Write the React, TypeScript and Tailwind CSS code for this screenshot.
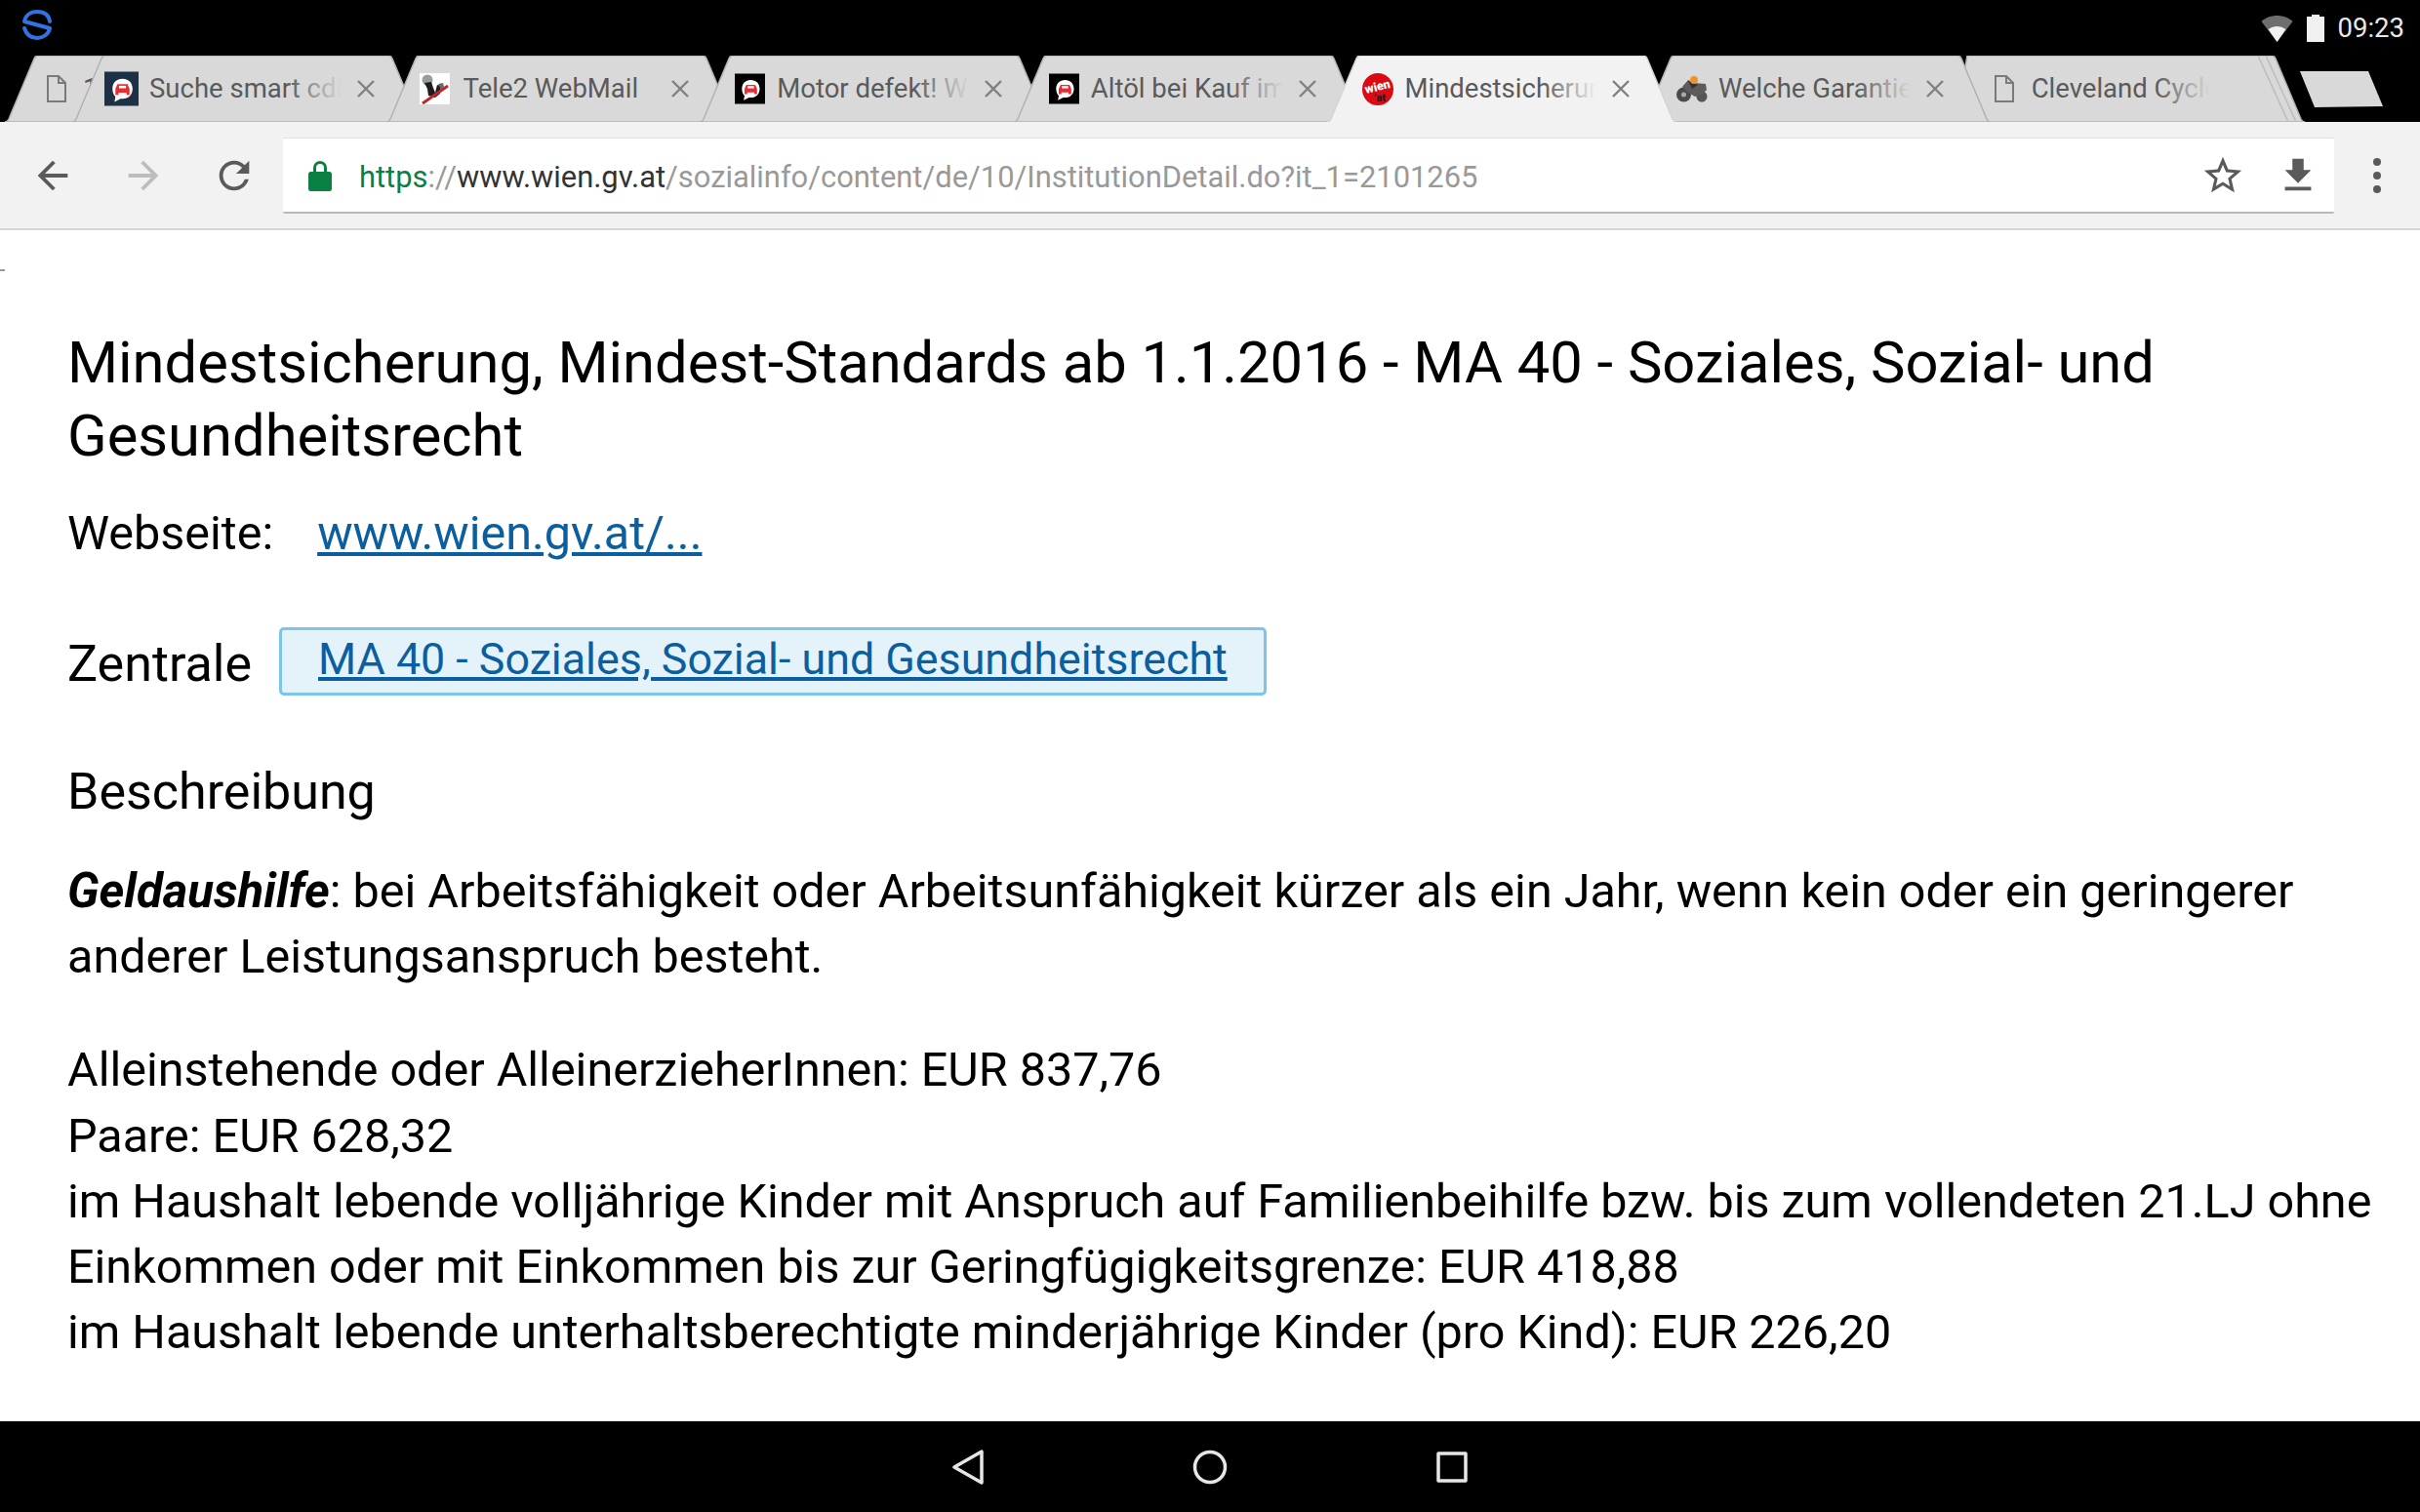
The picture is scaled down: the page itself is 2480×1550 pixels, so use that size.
import type { ReactNode } from 'react';

const font = { fontFamily: 'Roboto, "Noto Sans", sans-serif' };

function Md({ d, className }: { d: string; className?: string }) {
  return (
    <svg viewBox="0 0 24 24" className={className} fill="currentColor">
      <path d={d} />
    </svg>
  );
}

function PageIcon() {
  return (
    <svg viewBox="0 0 22 30" className="h-[30px] w-[22px]" fill="none" stroke="#7a7a7a" strokeWidth="2">
      <path d="M2 2h11l7 7v19H2z" />
      <path d="M13 2v7h7" />
    </svg>
  );
}

function CarBubble({ bg, large }: { bg: string; large?: boolean }) {
  return (
    <svg viewBox="0 0 34 34" className={large ? 'h-[36px] w-[35px]' : 'ml-[3px] h-[32px] w-[31px]'}>
      <rect width="34" height="34" fill={bg} />
      <path d="M18 7c6 0 10 4 10 10s-4 10-10 10h-2l-6 3 1-5c-2-2-3-5-3-8 0-6 4-10 10-10z" fill="#fff" />
      <path d="M13 12.5h10l2 4.5v6h-3v-2h-8v2h-3v-6z" fill="#ee2a2e" />
      <rect x="14.5" y="14" width="7" height="2.5" fill="#fff" />
    </svg>
  );
}

function TeleIcon() {
  return (
    <svg viewBox="0 0 31 32" className="ml-[1px] h-[32px] w-[31px]">
      <rect width="31" height="32" fill="#fff" />
      <circle cx="8" cy="7" r="5.5" fill="#9c9c9c" />
      <path d="M5 10l7-1 2 6 2 5 2-8 4 1-1 8-5 4-7-2-1-7z" fill="#1d1d1d" />
      <path d="M19 11l5-1 1 4-3 3z" fill="#6a6a6a" />
      <path d="M3 31L29 13" stroke="#c0272d" strokeWidth="3" />
    </svg>
  );
}

function WienIcon() {
  return (
    <svg viewBox="0 0 32 33" className="ml-[3px] h-[33px] w-[32px]">
      <ellipse cx="16" cy="16.5" rx="16" ry="16.5" fill="#dc0a12" />
      <text x="3" y="18" fontSize="12.5" fontWeight="900" fill="#fff" fontFamily="Roboto" transform="rotate(-14 16 16)">wien</text>
      <text x="12" y="29" fontSize="11" fontWeight="900" fill="#1c1c2c" fontFamily="Roboto">’at</text>
    </svg>
  );
}

function BikeIcon() {
  return (
    <svg viewBox="0 0 32 28" className="ml-[3px] h-[28px] w-[32px]">
      <circle cx="7.5" cy="20" r="7.5" fill="#4a4a4a" />
      <circle cx="26" cy="22" r="5.5" fill="#555" />
      <circle cx="7.5" cy="20" r="2.5" fill="#aaa" />
      <path d="M6 12l6-7 6 3 12 1 1 6-5 5-7 2-7-4z" fill="#5c5c5c" />
      <path d="M12 6l10 4-6 4z" fill="#333" />
      <circle cx="18" cy="5" r="4" fill="#ec9430" />
    </svg>
  );
}

type TabProps = {
  title: string;
  icon: ReactNode;
  className: string;
  active?: boolean;
  fade?: boolean;
  close?: boolean;
  wide?: boolean;
  stacked?: boolean;
  pad?: string;
  gap?: string;
  titleWidth?: string;
};

function Tab({
  title,
  icon,
  className,
  active,
  fade,
  close = true,
  wide,
  stacked,
  pad = 'pl-[33px]',
  gap = 'ml-[11px]',
  titleWidth = 'w-[197px]',
}: TabProps) {
  const left = wide ? 'M0 68L12 0' : 'M0 68C2 68 3 67 4 65L30 3C31 1 32 0 34 0';
  return (
    <div className={`relative flex h-[68px] w-[358px] shrink-0 items-center ${pad} ${className}`}>
      <svg viewBox="0 0 358 68" className="absolute inset-0 h-[68px] w-[358px]">
        <path
          d={`${left}H324C326 0 327 1 328 3L354 65C355 67 356 68 358 68${active ? '' : 'Z'}`}
          fill={active ? '#f2f2f2' : '#d9d9d9'}
          stroke={active ? '#d4d4d4' : '#b2b2b2'}
          strokeWidth="1.5"
        />
        {stacked && <path d="M310 0L341 68M318 0L349 68" stroke="#bcbcbc" strokeWidth="1.5" fill="none" />}
      </svg>
      <div className="relative flex w-[35px] shrink-0 items-center">{icon}</div>
      <div
        className={`relative ${gap} ${titleWidth} overflow-hidden whitespace-nowrap text-[27.5px] leading-[40px] text-[#5a5a5a]`}
      >
        {title}
        {fade && (
          <div
            className={`absolute inset-y-0 right-0 w-[56px] bg-linear-to-r from-transparent ${active ? 'to-[#f2f2f2]' : 'to-[#d9d9d9]'}`}
          />
        )}
      </div>
      {close && (
        <svg viewBox="0 0 18 18" className="relative ml-[16px] h-[18px] w-[18px]" stroke="#808080" strokeWidth="2.4">
          <path d="M1 1l16 16M17 1L1 17" />
        </svg>
      )}
    </div>
  );
}

function StatusBar() {
  return (
    <div className="flex h-[57px] items-center bg-black pl-[22px] pr-[16px]">
      <svg
        viewBox="0 0 32 32"
        className="-mt-[8px] h-[32px] w-[32px]"
        fill="none"
        stroke="#2f74e0"
        strokeWidth="4"
        strokeLinecap="round"
        strokeLinejoin="round"
      >
        <path d="M29 13C28 6 23 3 16 3 9 3 4 7 3 13L29 20C28 26 22 30 16 30 9 30 5 26 3 20" />
      </svg>
      <svg viewBox="0 0 32 28" className="ml-auto h-[28px] w-[33px]">
        <path d="M16 28L0 7C4 3 10 1 16 1s12 2 16 6z" fill="#6e6e6e" />
        <path d="M16 28L7 15c3-2 6-3 9-3s6 1 9 3z" fill="#f0f0f0" />
      </svg>
      <svg viewBox="0 0 18 28" className="ml-[14px] h-[28px] w-[18px]" fill="#f0f0f0">
        <path d="M5 0h8v2h5v26H0V2h5z" />
      </svg>
      <span className="ml-[14px] text-[27.5px] leading-none text-[#e8e8e8]">09:23</span>
    </div>
  );
}

function TabStrip() {
  return (
    <div className="flex h-[68px] items-end bg-black pl-[5px]">
      <Tab title="1" icon={<PageIcon />} className="z-0" pad="pl-[42px]" gap="ml-[3px]" />
      <Tab
        title="Suche smart cdi"
        fade
        icon={<CarBubble bg="#1c3146" large />}
        className="z-10 -ml-[289px]"
      />
      <Tab title="Tele2 WebMail" icon={<TeleIcon />} className="z-20 -ml-[36.4px]" />
      <Tab title="Motor defekt! Was" fade icon={<CarBubble bg="#000" />} className="z-30 -ml-[36.4px]" />
      <Tab title="Altöl bei Kauf im" fade icon={<CarBubble bg="#000" />} className="z-40 -ml-[36.4px]" />
      <Tab title="Mindestsicherung" fade active icon={<WienIcon />} className="z-[70] -ml-[36.4px]" />
      <Tab title="Welche Garantie" fade icon={<BikeIcon />} className="z-[60] -ml-[36.4px]" />
      <Tab
        title="Cleveland Cycle"
        fade
        close={false}
        wide
        stacked
        icon={<PageIcon />}
        className="z-50 -ml-[36.4px]"
        pad="pl-[39px]"
        gap="ml-[4px]"
        titleWidth="w-[183px]"
      />
      <div className="relative mb-[15px] ml-[-6px] h-[38px] w-[86px]">
        <svg viewBox="0 0 86 38" className="h-[38px] w-[86px]">
          <path d="M1 1H71L86 37 16 38z" fill="#d9d9d9" />
        </svg>
      </div>
    </div>
  );
}

function Toolbar() {
  return (
    <div className="flex h-[111px] items-center border-b-2 border-[#d6d6d6] bg-[#f2f2f2] pl-[31px] pt-[1px]">
      <Md
        className="h-[46px] w-[46px] text-[#5a5a5a]"
        d="M20 11H7.83l5.59-5.59L12 4l-8 8 8 8 1.41-1.41L7.83 13H20v-2z"
      />
      <Md
        className="ml-[47px] h-[46px] w-[46px] text-[#bdbdbd]"
        d="M4 11h12.17l-5.59-5.59L12 4l8 8-8 8-1.41-1.41L16.17 13H4v-2z"
      />
      <Md
        className="ml-[47px] h-[46px] w-[46px] text-[#5a5a5a]"
        d="M17.65 6.35C16.2 4.9 14.21 4 12 4c-4.42 0-7.99 3.58-7.99 8s3.57 8 7.99 8c3.73 0 6.84-2.55 7.73-6h-2.08c-.82 2.33-3.04 4-5.65 4-3.31 0-6-2.69-6-6s2.69-6 6-6c1.66 0 3.14.69 4.22 1.78L13 11h7V4l-2.35 2.35z"
      />
      <div className="ml-[27px] flex h-[78px] w-[2102px] items-center rounded-[2px] border-t border-b-2 border-t-[#e0e0e0] border-b-[#b8b8b8] bg-white pl-[26px] pr-[14px]">
        <svg viewBox="0 0 24 32" className="h-[32px] w-[24px]" fill="#0b8043">
          <path d="M5 13V8a7 7 0 0 1 14 0v5h-3V8a4 4 0 0 0-8 0v5z" />
          <rect y="12" width="24" height="20" rx="2.5" />
        </svg>
        <div className="ml-[28px] mt-[4px] whitespace-nowrap text-[30.9px] leading-[44px] text-[#999999]">
          <span className="text-[#0b8043]">https</span>
          ://
          <span className="text-[#333333]">www.wien.gv.at</span>
          /sozialinfo/content/de/10/InstitutionDetail.do?it_1=2101265
        </div>
        <Md
          className="ml-auto h-[46px] w-[46px] text-[#5a5a5a]"
          d="M22 9.24l-7.19-.62L12 2 9.19 8.63 2 9.24l5.46 4.73L5.82 21 12 17.27 18.18 21l-1.63-7.03L22 9.24zM12 15.4l-3.76 2.27 1-4.28-3.32-2.88 4.38-.38L12 6.1l1.71 4.04 4.38.38-3.32 2.88 1 4.28L12 15.4z"
        />
        <Md
          className="ml-[31px] h-[46px] w-[46px] text-[#5a5a5a]"
          d="M19 9h-4V3H9v6H5l7 7 7-7zM5 18v2h14v-2H5z"
        />
      </div>
      <div className="ml-[40px] flex flex-col gap-[6px]">
        <span className="h-[8px] w-[8px] rounded-full bg-[#5a5a5a]" />
        <span className="h-[8px] w-[8px] rounded-full bg-[#5a5a5a]" />
        <span className="h-[8px] w-[8px] rounded-full bg-[#5a5a5a]" />
      </div>
    </div>
  );
}

function Content() {
  return (
    <main className="relative flex-1 overflow-hidden bg-white pl-[69px] pt-[99px] text-black">
      <div className="absolute left-0 top-[40px] h-[2px] w-[5px] bg-[#999999]" />
      <h1 className="text-[59.7px] font-normal leading-[75px]">
        Mindestsicherung, Mindest-Standards ab 1.1.2016 - MA 40 - Soziales, Sozial- und
        <br />
        Gesundheitsrecht
      </h1>
      <div className="mt-[28px] flex text-[48.5px] leading-[67px]">
        <span>Webseite:</span>
        <a className="ml-[45px] text-[#0b5fa0] underline">www.wien.gv.at/...</a>
      </div>
      <div className="mt-[63px] flex items-start">
        <span className="pt-[3px] text-[52px] leading-[70px]">Zentrale</span>
        <div className="ml-[28px] flex h-[70px] w-[1012px] items-center rounded-[5px] border-[3px] border-[#7cc4ea] bg-[#e4f2fa] pb-[4px] pl-[37px] text-[44.8px]">
          <a className="text-[#0b5fa0] underline">MA 40 - Soziales, Sozial- und Gesundheitsrecht</a>
        </div>
      </div>
      <h2 className="mt-[61px] text-[52px] font-normal leading-[70px]">Beschreibung</h2>
      <p className="mt-[33px] text-[48.5px] leading-[67.2px]">
        <b className="text-[49.2px] italic">Geldaushilfe</b>: bei Arbeitsfähigkeit oder Arbeitsunfähigkeit kürzer als ein Jahr, wenn kein oder ein geringerer
        <br />
        anderer Leistungsanspruch besteht.
      </p>
      <p className="mt-[49px] whitespace-nowrap text-[48.5px] leading-[67.2px]">
        Alleinstehende oder AlleinerzieherInnen: EUR 837,76
        <br />
        Paare: EUR 628,32
        <br />
        im Haushalt lebende volljährige Kinder mit Anspruch auf Familienbeihilfe bzw. bis zum vollendeten 21.LJ ohne
        <br />
        Einkommen oder mit Einkommen bis zur Geringfügigkeitsgrenze: EUR 418,88
        <br />
        im Haushalt lebende unterhaltsberechtigte minderjährige Kinder (pro Kind): EUR 226,20
      </p>
    </main>
  );
}

function NavBar() {
  return (
    <div className="flex h-[93px] items-center justify-center gap-[214px] bg-black">
      <svg viewBox="0 0 32 36" className="h-[36px] w-[32px]" fill="none" stroke="#e6e6e6" strokeWidth="3.5" strokeLinejoin="round">
        <path d="M30 2v32L2 18z" />
      </svg>
      <svg viewBox="0 0 36 36" className="h-[36px] w-[36px]" fill="none" stroke="#e6e6e6" strokeWidth="3.5">
        <circle cx="18" cy="18" r="15.5" />
      </svg>
      <svg viewBox="0 0 32 32" className="h-[32px] w-[32px]" fill="none" stroke="#e6e6e6" strokeWidth="3.5" strokeLinejoin="round">
        <rect x="2" y="2" width="28" height="28" />
      </svg>
    </div>
  );
}

export default function App() {
  return (
    <div className="flex h-[1550px] w-[2480px] flex-col overflow-hidden bg-black" style={font}>
      <StatusBar />
      <TabStrip />
      <Toolbar />
      <Content />
      <NavBar />
    </div>
  );
}
